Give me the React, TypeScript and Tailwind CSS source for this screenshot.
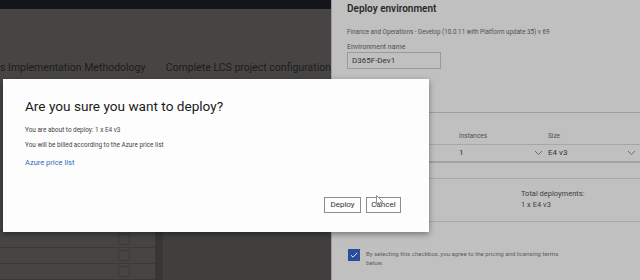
const rows = [0, 1, 2, 3];

const Chevron = () => (
  <svg width="9" height="6" viewBox="0 0 9 6" className="shrink-0">
    <path d="M1 1l3.5 3.5L8 1" fill="none" stroke="#6b6b6b" strokeWidth="1" />
  </svg>
);

const App = () => {
  return (
    <div className="relative w-[640px] h-[280px] overflow-hidden flex font-['Roboto',sans-serif]">
      {/* backdrop page, dimmed */}
      <div className="w-[331px] flex flex-col bg-[#474543]">
        <div className="h-[10px] bg-[#14141b]" />
        <div className="h-[52px]" />
        <div className="h-[20px] leading-[20px] text-[10.5px] text-[#1c1c1c] flex whitespace-nowrap">
          <span className="w-[171px]">s Implementation Methodology</span>
          <span>Complete LCS project configuration</span>
        </div>
        <div className="h-[146px]" />
        {rows.map((r) => (
          <div key={r} className="h-[16px] flex shrink-0">
            <div className="w-[155px] border-b border-[#3a3937] flex items-start">
              <div className="ml-[118px] mt-[2px] w-[12px] h-[11px] border border-[#3a3938] rounded-[1px]" />
            </div>
            <div className="w-[8px] bg-[#383735]" />
            <div className="flex-1 bg-[#42403e]" />
          </div>
        ))}
      </div>

      {/* deploy environment side panel */}
      <div className="flex-1 bg-[#c0c0c0] flex flex-col text-[#3a3a3a] border-l border-[#9c9c9c]">
        <div className="pl-[15px]">
          <div className="mt-[2px] h-[14px] leading-[14px] text-[10px] font-semibold text-[#2a2a2a]">
            Deploy environment
          </div>
          <div className="mt-[11px] h-[10px] leading-[10px] text-[6.3px] text-[#505050] whitespace-nowrap">
            Finance and Operations - Develop (10.0.11 with Platform update 35) v 69
          </div>
          <div className="mt-[5px] h-[10px] leading-[10px] text-[7px] text-[#505050]">Environment name</div>
          <div className="w-[94px] h-[17px] border border-[#9a9a9a] pl-[4px] leading-[15px] text-[8px] text-[#333]">
            D365F-Dev1
          </div>
        </div>
        <div className="mt-[43px] h-px bg-[#9e9e9e]" />
        <div className="pl-[15px] h-[32px] pt-[18px] flex text-[6.5px] leading-[10px] text-[#505050] border-b border-[#a7a7a7]">
          <span className="w-[112px]" />
          <span className="w-[89px]">Instances</span>
          <span>Size</span>
        </div>
        <div className="pl-[15px] h-[16px] leading-[16px] flex items-center text-[8px] text-[#333]">
          <span className="w-[112px]" />
          <span className="w-[89px] flex items-center justify-between pr-[5px]">
            1
            <Chevron />
          </span>
          <span className="w-[88px] flex items-center justify-between">
            E4 v3
            <Chevron />
          </span>
        </div>
        <div className="h-[2px] bg-[#a2a2a2]" />
        <div className="mt-[15px] h-px bg-[#a7a7a7]" />
        <div className="mt-[10px] pl-[189px] text-[7.5px] leading-[10.5px] text-[#3d3d3d]">
          <div>Total deployments:</div>
          <div>1 x E4 v3</div>
        </div>
        <div className="mt-[11px] h-px bg-[#a7a7a7]" />
        <div className="mt-[27px] pl-[16px] flex items-start gap-[6px]">
          <div className="w-[12px] h-[12px] bg-[#2b4c9c] flex items-center justify-center">
            <svg width="8" height="6" viewBox="0 0 8 6">
              <path d="M0.8 3l2.2 2.2L7.2 0.8" fill="none" stroke="#e6e6e6" strokeWidth="1" />
            </svg>
          </div>
          <div className="text-[6.1px] leading-[9px] text-[#5e5e5e] whitespace-nowrap">
            By selecting this checkbox, you agree to the pricing and licensing terms
            <br />
            below.
          </div>
        </div>
      </div>

      {/* confirmation dialog */}
      <div className="absolute left-[3px] top-[79px] w-[426px] h-[153px] bg-[#fdfdfd] shadow-[0_2px_6px_rgba(0,0,0,0.4)] flex flex-col pl-[22px]">
        <div className="pt-[19px] h-[35px] leading-[16px] text-[13.6px] text-[#1b1b1b]">
          Are you sure you want to deploy?
        </div>
        <div className="mt-[12px] h-[9px] leading-[9px] text-[6.4px] text-[#444]">You are about to deploy: 1 x E4 v3</div>
        <div className="mt-[6px] h-[9px] leading-[9px] text-[6.4px] text-[#444]">
          You will be billed according to the Azure price list
        </div>
        <div className="mt-[7px] h-[12px] leading-[12px] text-[7.5px] text-[#2f6cbd]">Azure price list</div>
        <div className="mt-auto mb-[19px] mr-[28px] flex justify-end gap-[5px]">
          <button className="w-[37px] h-[16px] border border-[#8c8c8c] text-[8px] leading-[14px] text-[#333]">
            Deploy
          </button>
          <button className="w-[35px] h-[16px] border border-[#8c8c8c] text-[8px] leading-[14px] text-[#333]">
            Cancel
          </button>
        </div>
      </div>

      {/* mouse pointer */}
      <svg className="absolute left-[376px] top-[195px]" width="8" height="12" viewBox="0 0 8 12">
        <path d="M0.5 0.5v9l2.2-2 1.6 3.6 1.4-0.6-1.6-3.4h3z" fill="#fff" stroke="#777" strokeWidth="0.8" />
      </svg>
    </div>
  );
};

export default App;
